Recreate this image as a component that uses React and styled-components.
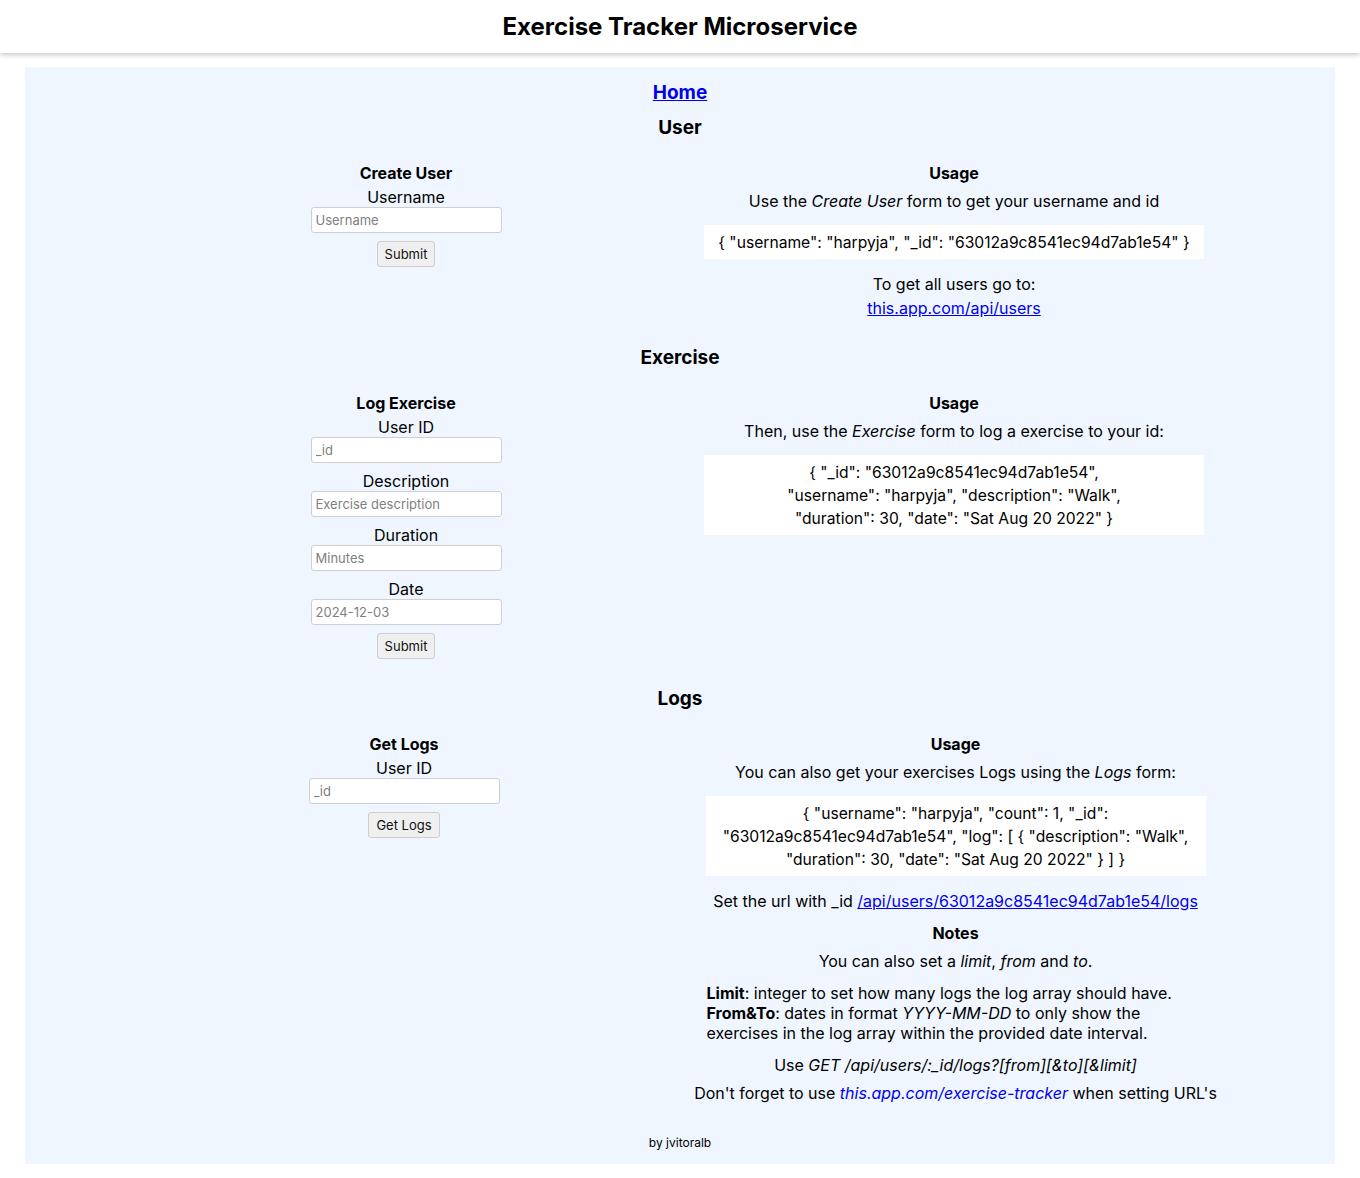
import React from 'react';
import styled, { createGlobalStyle } from 'styled-components';

const GlobalStyle = createGlobalStyle`
  body {
    margin: 0;
    background: #ffffff;
    font-family: Inter, "Noto Sans", sans-serif;
    color: #000;
  }
`

const Header = styled.header`
  height: 53px;
  display: flex;
  align-items: center;
  justify-content: center;
  background: #fff;
  box-shadow: 0 2px 5px rgba(0, 0, 0, 0.22);
  h1 {
    margin: 0;
    font-size: 24px;
    font-weight: 700;
    line-height: 1;
  }
`

const Main = styled.main`
  margin: 14px 25px 15px;
  padding: 14px 0 14px;
  background: #eff6ff;
  display: flex;
  flex-direction: column;
  align-items: center;
`

const HomeLink = styled.a`
  font-size: 19px;
  font-weight: 700;
  line-height: 24px;
  color: #0000ee;
  text-decoration: underline;
`

const SectionTitle = styled.h2`
  margin: ${p => p.$mt}px 0 23px;
  font-size: 19px;
  font-weight: 700;
  line-height: 24px;
`

const Columns = styled.div`
  display: grid;
  grid-template-columns: 530px 530px;
  column-gap: 20px;
  justify-content: center;
  width: 100%;
  align-items: start;
`

const FormCol = styled.form`
  display: flex;
  flex-direction: column;
  align-items: center;
  margin-left: ${p => p.$shift || 0}px;
`

const ColTitle = styled.h3`
  margin: 0 0 ${p => p.$mb ?? 4}px;
  font-size: 16px;
  font-weight: 700;
  line-height: 20px;
`

const Label = styled.label`
  font-size: 16px;
  line-height: 20px;
`

const Input = styled.input`
  box-sizing: border-box;
  width: 191px;
  height: 26px;
  margin-bottom: 8px;
  padding: 0 4px;
  border: 1px solid #cfcfcf;
  border-radius: 3px;
  background: #fff;
  font-family: Inter, sans-serif;
  font-size: 13px;
  color: #222;
  &::placeholder {
    color: #808080;
  }
`

const Button = styled.button`
  height: 26px;
  padding: 0 7px;
  border: 1px solid #cdcdcd;
  border-radius: 3px;
  background: #efefef;
  font-family: Inter, sans-serif;
  font-size: 13px;
  color: #111;
`

const InfoCol = styled.div`
  display: flex;
  flex-direction: column;
  align-items: center;
  text-align: center;
  margin-left: ${p => p.$shift || 0}px;
`

const Text = styled.p`
  margin: ${p => p.$mt || 0}px 0 0;
  font-size: 16px;
  line-height: 20px;
  white-space: nowrap;
`

const Code = styled.div`
  box-sizing: border-box;
  width: 500px;
  margin-top: 14px;
  padding: 6px 8px 5px;
  background: #fff;
  font-size: 15.65px;
  line-height: 23px;
  text-align: center;
  white-space: nowrap;
`

const Link = styled.a`
  color: #0000ee;
  text-decoration: ${p => (p.$plain ? 'none' : 'underline')};
  font-style: ${p => (p.$italic ? 'italic' : 'normal')};
`

const NotesTitle = styled.h4`
  margin: 12px 0 0;
  font-size: 16px;
  font-weight: 700;
  line-height: 20px;
`

const NotesBlock = styled.p`
  box-sizing: border-box;
  width: 500px;
  margin: 12px 0 0;
  padding-left: 1px;
  font-size: 16px;
  line-height: 20px;
  text-align: left;
  white-space: nowrap;
`

const Footer = styled.footer`
  margin-top: 32px;
  font-size: 12px;
  line-height: 15px;
`

const App = () => {
  return (
    <>
      <GlobalStyle />
      <Header>
        <h1>Exercise Tracker Microservice</h1>
      </Header>
      <Main>
        <HomeLink href="#">Home</HomeLink>
        <SectionTitle $mt={11}>User</SectionTitle>
        <Columns>
          <FormCol $shift={2} onSubmit={e => e.preventDefault()}>
            <ColTitle>Create User</ColTitle>
            <Label>Username</Label>
            <Input placeholder="Username" />
            <Button>Submit</Button>
          </FormCol>
          <InfoCol $shift={-2}>
            <ColTitle $mb={8}>Usage</ColTitle>
            <Text>Use the <i>Create User</i> form to get your username and id</Text>
            <Code>{'{ "username": "harpyja", "_id": "63012a9c8541ec94d7ab1e54" }'}</Code>
            <Text $mt={15}>To get all users go to:</Text>
            <Text $mt={4}><Link href="#">this.app.com/api/users</Link></Text>
          </InfoCol>
        </Columns>

        <SectionTitle $mt={28}>Exercise</SectionTitle>
        <Columns>
          <FormCol $shift={2} onSubmit={e => e.preventDefault()}>
            <ColTitle>Log Exercise</ColTitle>
            <Label>User ID</Label>
            <Input placeholder="_id" />
            <Label>Description</Label>
            <Input placeholder="Exercise description" />
            <Label>Duration</Label>
            <Input placeholder="Minutes" />
            <Label>Date</Label>
            <Input placeholder="2024-12-03" />
            <Button>Submit</Button>
          </FormCol>
          <InfoCol $shift={-2}>
            <ColTitle $mb={8}>Usage</ColTitle>
            <Text>Then, use the <i>Exercise</i> form to log a exercise to your id:</Text>
            <Code>
              {'{ "_id": "63012a9c8541ec94d7ab1e54",'}<br />
              {'"username": "harpyja", "description": "Walk",'}<br />
              {'"duration": 30, "date": "Sat Aug 20 2022" }'}
            </Code>
          </InfoCol>
        </Columns>

        <SectionTitle $mt={28}>Logs</SectionTitle>
        <Columns>
          <FormCol $shift={-2} onSubmit={e => e.preventDefault()}>
            <ColTitle>Get Logs</ColTitle>
            <Label>User ID</Label>
            <Input placeholder="_id" />
            <Button>Get Logs</Button>
          </FormCol>
          <InfoCol $shift={1}>
            <ColTitle $mb={8}>Usage</ColTitle>
            <Text>You can also get your exercises Logs using the <i>Logs</i> form:</Text>
            <Code>
              {'{ "username": "harpyja", "count": 1, "_id":'}<br />
              {'"63012a9c8541ec94d7ab1e54", "log": [ { "description": "Walk",'}<br />
              {'"duration": 30, "date": "Sat Aug 20 2022" } ] }'}
            </Code>
            <Text $mt={15}>Set the url with _id <Link href="#">/api/users/63012a9c8541ec94d7ab1e54/logs</Link></Text>
            <NotesTitle>Notes</NotesTitle>
            <Text $mt={8}>You can also set a <i>limit</i>, <i>from</i> and <i>to</i>.</Text>
            <NotesBlock>
              <b>Limit</b>: integer to set how many logs the log array should have.<br />
              <b>From&amp;To</b>: dates in format <i>YYYY-MM-DD</i> to only show the<br />
              exercises in the log array within the provided date interval.
            </NotesBlock>
            <Text $mt={12}>Use <i>GET /api/users/:_id/logs?[from][&amp;to][&amp;limit]</i></Text>
            <Text $mt={8}>Don't forget to use <Link href="#" $plain $italic>this.app.com/exercise-tracker</Link> when setting URL's</Text>
          </InfoCol>
        </Columns>
        <Footer>by jvitoralb</Footer>
      </Main>
    </>
  );
};

export default App;
